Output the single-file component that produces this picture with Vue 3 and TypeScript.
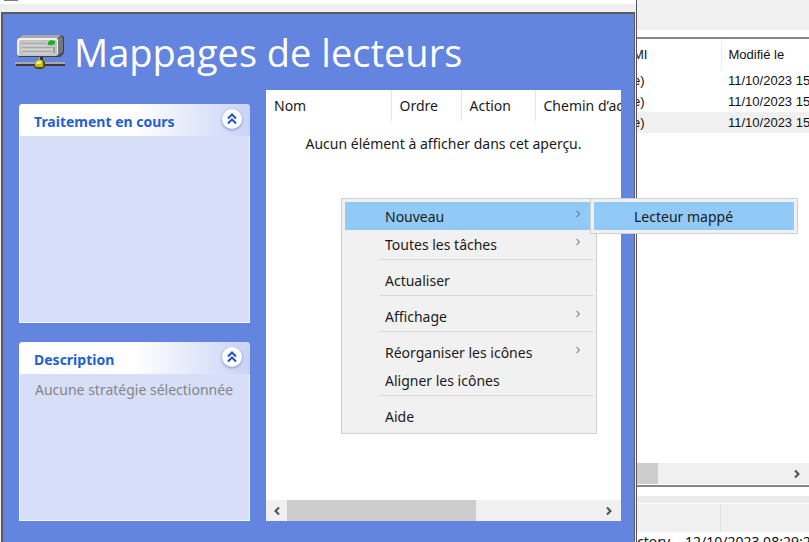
<script setup lang="ts">
import { ref } from 'vue'

interface MenuEntry {
  label: string
  submenu?: boolean
  active?: boolean
}

const menuGroups: MenuEntry[][] = [
  [
    { label: 'Nouveau', submenu: true, active: true },
    { label: 'Toutes les tâches', submenu: true },
  ],
  [{ label: 'Actualiser' }],
  [{ label: 'Affichage', submenu: true }],
  [{ label: 'Réorganiser les icônes', submenu: true }, { label: 'Aligner les icônes' }],
  [{ label: 'Aide' }],
]

const columns = ['Nom', 'Ordre', 'Action', 'Chemin d’accès']

const filters = [
  { name: 'e)', modified: '11/10/2023 15:12' },
  { name: 'e)', modified: '11/10/2023 15:12' },
  { name: 'e)', modified: '11/10/2023 15:12' },
]
const selected = ref(2)

const panels = [
  { title: 'Traitement en cours', text: '', size: 'tall' },
  { title: 'Description', text: 'Aucune stratégie sélectionnée', size: 'short' },
]
</script>

<template>
  <div class="desktop">
    <main class="window">
      <div class="caption"><span class="caption-icon"></span></div>
      <div class="frame">
        <header class="title">
          <svg class="drive" width="52" height="36" viewBox="0 0 52 36" aria-hidden="true">
            <path d="M7 1h39l3 2v16l-4 4H4l-2-3V6z" fill="#3f3f42" />
            <path d="M7 1h39l-4 4H3z" fill="#a9a9aa" />
            <path d="M42 5l4-3 2 2v14l-5 4z" fill="#77777a" />
            <rect x="2" y="4" width="41" height="18" rx="3" fill="#f1f1f1" />
            <rect x="4" y="6" width="38" height="16" rx="2" fill="#c4c4c4" />
            <path d="M7 10h25M7 14h31M7 18h29" stroke="#8c8c8c" stroke-width="1" />
            <path d="M7 11h25M7 15h31M7 19h29" stroke="#e6e6e6" stroke-width="1" />
            <path d="M33 8l3-2 4 1v3l-3 1h-4z" fill="#12b51c" />
            <path d="M39 13v6" stroke="#777" />
            <path d="M24 23h4v5h-4z" fill="#333" />
            <path d="M24 23h1v5h-1z" fill="#a5a5a5" />
            <path d="M0 29h50" stroke="#a9a9a9" stroke-width="2" />
            <path d="M1 31h49" stroke="#3a3a3d" stroke-width="2" />
            <path d="M20 28l2-2h6l2 2v5l-3 2h-5l-3-2z" fill="#4d4a08" />
            <path d="M20 28l2-2h5l1 2v5h-6l-2-1z" fill="#c9bd1b" />
            <path d="M21 29l2-2h3v3h-5z" fill="#f4ed7b" />
          </svg>
          <h1>Mappages de lecteurs</h1>
        </header>

        <div class="content">
          <aside class="side">
            <section v-for="p in panels" :key="p.title" class="panel" :class="p.size">
              <div class="panel-head">
                <h2>{{ p.title }}</h2>
                <button type="button" class="collapse" :aria-label="p.title">
                  <svg width="12" height="12" viewBox="0 0 12 12" aria-hidden="true">
                    <path d="M2 5.5l4-4 4 4M2 10.5l4-4 4 4" fill="none" stroke="#2456b8" stroke-width="2" />
                  </svg>
                </button>
              </div>
              <p v-if="p.text">{{ p.text }}</p>
            </section>
          </aside>

          <section class="list">
            <table>
              <thead>
                <tr>
                  <th v-for="(c, i) in columns" :key="c" :class="'col-' + i">{{ c }}</th>
                </tr>
              </thead>
              <tbody>
                <tr>
                  <td colspan="4">Aucun élément à afficher dans cet aperçu.</td>
                </tr>
              </tbody>
            </table>
            <div class="scrollbar">
              <button type="button" aria-label="Gauche">
                <svg width="8" height="10" viewBox="0 0 8 10"><path d="M6 1.500L2.500 5 6 8.500" /></svg>
              </button>
              <div class="track"><div class="thumb"></div></div>
              <button type="button" class="next" aria-label="Droite">
                <svg width="8" height="10" viewBox="0 0 8 10"><path d="M2 1.500L5.500 5 2 8.500" /></svg>
              </button>
            </div>
          </section>
        </div>
      </div>
    </main>

    <aside class="behind">
      <div class="toolbar"></div>
      <div class="filters">
        <table>
          <thead>
            <tr><th class="name">MI</th><th>Modifié le</th></tr>
          </thead>
          <tbody>
            <tr v-for="(f, i) in filters" :key="i" :class="{ selected: i === selected }" @click="selected = i">
              <td class="name">{{ f.name }}</td>
              <td>{{ f.modified }}</td>
            </tr>
          </tbody>
        </table>
        <div class="scrollbar">
          <div class="track"><div class="thumb end"></div></div>
          <button type="button" class="next" aria-label="Droite">
            <svg width="8" height="10" viewBox="0 0 8 10"><path d="M2 1.500L5.500 5 2 8.500" /></svg>
          </button>
        </div>
      </div>
      <div class="splitter"></div>
      <div class="log-head"><span></span></div>
      <div class="log"><span class="log-name">ctory</span><span>12/10/2023 08:29:22</span></div>
    </aside>

    <div class="menu" role="menu">
      <div v-for="(group, g) in menuGroups" :key="g" class="group">
        <button
          v-for="entry in group"
          :key="entry.label"
          type="button"
          role="menuitem"
          :class="{ active: entry.active }"
        >
          {{ entry.label }}
          <svg v-if="entry.submenu" width="6" height="8" viewBox="0 0 6 8" aria-hidden="true">
            <path d="M1.500 1l3 3-3 3" fill="none" stroke="#555" />
          </svg>
        </button>
      </div>
    </div>
    <div class="menu submenu" role="menu">
      <button type="button" role="menuitem" class="active">Lecteur mappé</button>
    </div>
  </div>
</template>

<style>
body {
  margin: 0;
  overflow: hidden;
}
</style>

<style scoped>
* {
  box-sizing: border-box;
}
.desktop {
  position: relative;
  display: flex;
  height: 100vh;
  overflow: hidden;
  background: #fff;
  color: #1a1a1a;
  font-family: 'Noto Sans', sans-serif;
  font-size: 14px;
}
h1,
h2,
p {
  margin: 0;
}
button {
  padding: 0;
  border: 0;
  background: none;
  color: inherit;
  font: inherit;
}
table {
  border-collapse: collapse;
  table-layout: fixed;
}
th {
  font-weight: 400;
  text-align: left;
}
th,
td {
  padding: 0;
  white-space: nowrap;
}

/* Foreground window */
.window {
  flex: 1;
  min-width: 0;
  display: flex;
  flex-direction: column;
  padding: 0 1px;
  border-right: 1px solid #55555f;
  background: #f0f0f0;
}
.caption {
  height: 12px;
  margin: 0 -1px;
  border-bottom: 8px solid #efeff0;
  background: #fff;
}
.caption-icon {
  display: block;
  width: 14px;
  height: 1px;
  margin-left: 4px;
  background: #77758a;
}
.frame {
  flex: 1;
  min-height: 0;
  display: flex;
  flex-direction: column;
  padding: 0 13px 21px 16px;
  border: solid #5a5a60;
  border-width: 2px 1px 0 2px;
  background: #6384df;
}
.title {
  display: flex;
  align-items: center;
  gap: 7px;
  height: 76px;
  margin-left: -4px;
}
.drive {
  flex: none;
}
h1 {
  color: #fff;
  font-family: 'Open Sans', sans-serif;
  font-size: 38px;
  font-weight: 400;
  line-height: 72px;
  white-space: nowrap;
}
.content {
  flex: 1;
  min-height: 0;
  display: flex;
  gap: 16px;
}
.side {
  width: 231px;
  display: flex;
  flex-direction: column;
  gap: 19px;
  padding-top: 14px;
}
.panel {
  border: 1px solid #f4f6fd;
  border-top: 0;
  border-radius: 4px 4px 0 0;
  background: #d7def8;
}
.tall {
  flex: 219;
}
.short {
  flex: 178;
}
.panel-head {
  display: flex;
  align-items: center;
  justify-content: space-between;
  height: 32px;
  margin: 0 -1px;
  padding: 0 8px 0 15px;
  border-radius: 4px 4px 0 0;
  background: linear-gradient(90deg, #fff 50%, #c8d4f7);
}
h2 {
  padding-top: 2px;
  color: #2560d2;
  font-size: 14px;
  font-weight: 700;
}
.collapse {
  display: grid;
  place-items: center;
  width: 20px;
  height: 20px;
  margin-bottom: 2px;
  border-radius: 50%;
  background: #fff;
  box-shadow: 0 1px 3px #7d8cba;
}
.panel p {
  padding: 6px 15px;
  color: #858585;
  line-height: 20px;
  white-space: nowrap;
}
.list {
  flex: 1;
  min-width: 0;
  display: flex;
  flex-direction: column;
  justify-content: space-between;
  overflow: hidden;
  background: #fff;
}
.list table {
  width: 100%;
}
.list th {
  height: 31px;
  padding-left: 8px;
  border-right: 1px solid #e4e4e4;
  overflow: hidden;
}
.list th:last-child {
  border: 0;
}
.list td {
  height: 44px;
  text-align: center;
}
.col-0 {
  width: 125px;
}
.col-1 {
  width: 70px;
}
.col-2 {
  width: 74px;
}

/* Scrollbars */
.scrollbar {
  display: flex;
  height: 21px;
  background: #f0f0f0;
}
.scrollbar button {
  display: grid;
  place-items: center;
  width: 21px;
}
.scrollbar .next {
  width: 24px;
}
.scrollbar path {
  fill: none;
  stroke: #505050;
  stroke-width: 2;
}
.track {
  flex: 1;
}
.thumb {
  width: 61%;
  height: 100%;
  background: #cdcdcd;
}
.thumb.end {
  width: 21px;
}

/* Window behind */
.behind {
  width: 172px;
  display: flex;
  flex-direction: column;
  overflow: hidden;
  color: #111;
  font-family: 'Liberation Sans', sans-serif;
  font-size: 13px;
}
.toolbar {
  height: 30px;
  background: #f0f0f0;
}
.filters {
  flex: 1;
  min-height: 0;
  display: flex;
  flex-direction: column;
  justify-content: space-between;
  margin-top: 7px;
  padding-bottom: 1px;
  border: solid #85858a;
  border-width: 2px 0;
}
.filters table {
  width: 100%;
}
.filters th {
  height: 31px;
}
.filters th,
.filters td {
  padding-left: 7px;
  overflow: hidden;
}
.filters th.name {
  border-right: 1px solid #ededed;
}
.filters .name {
  width: 84px;
  padding-left: 0;
  text-indent: -4px;
}
.filters td {
  height: 21px;
}
.selected {
  background: #f0f0f0;
}
.splitter {
  height: 8px;
  margin-top: 9px;
  border-bottom: 1px solid #fff;
  background: #ececec;
}
.log-head {
  height: 28px;
  background: #f0f0f0;
}
.log-head span {
  display: block;
  width: 84px;
  height: 100%;
  border-right: 1px solid #e2e2e2;
}
.log {
  display: flex;
  height: 10px;
  overflow: hidden;
  font-family: 'Noto Sans', sans-serif;
  font-size: 14px;
  line-height: 20px;
  white-space: nowrap;
}
.log-name {
  flex: none;
  width: 48px;
}

/* Context menus */
.menu {
  position: absolute;
  top: 198px;
  left: 341px;
  width: 256px;
  padding: 3px;
  border: 1px solid #cfcfcf;
  background: #f1f1f1;
}
.menu button {
  display: flex;
  align-items: center;
  justify-content: space-between;
  width: 100%;
  height: 28px;
  padding: 0 12px 0 40px;
  white-space: nowrap;
}
.menu svg {
  margin-bottom: 4px;
}
.menu .active {
  background: #91c9f7;
}
.group + .group::before {
  content: '';
  display: block;
  height: 1px;
  margin: 1px 0 6px 35px;
  background: #d9d9d9;
}
.submenu {
  left: 590px;
  width: 208px;
}
</style>
